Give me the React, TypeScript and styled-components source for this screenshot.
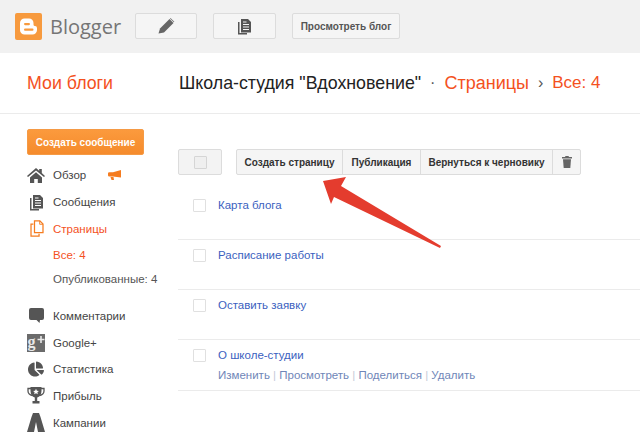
import React from 'react';
import styled, { createGlobalStyle } from 'styled-components';
import { FaChartPie } from 'react-icons/fa';

const GlobalStyle = createGlobalStyle`
  html, body {
    margin: 0;
    padding: 0;
    background: #fff;
    font-family: "Liberation Sans", Arial, sans-serif;
  }
`;

const Page = styled.div`
  position: relative;
  width: 640px;
  height: 433px;
  overflow: hidden;
`;

const TopBar = styled.header`
  display: flex;
  align-items: center;
  height: 53px;
  padding: 0 0 1px 15px;
  box-sizing: border-box;
  background: #f1f1f1;
`;

const Brand = styled.div`
  display: flex;
  align-items: center;
  gap: 8px;
  width: 120px;
  font-family: "Open Sans", sans-serif;
  font-size: 20px;
  color: #757575;
`;

const TopButton = styled.button<{ $width: number }>`
  display: flex;
  align-items: center;
  justify-content: center;
  width: ${p => p.$width}px;
  height: 26px;
  margin-right: 16px;
  padding: 0;
  border: 1px solid #dcdcdc;
  border-radius: 2px;
  background: #f5f5f5;
  color: #555;
  font: bold 10px "Liberation Sans", Arial, sans-serif;
`;

const TitleRow = styled.div`
  display: flex;
  align-items: center;
  height: 61px;
  padding: 0 0 0 27px;
  box-sizing: border-box;
  border-bottom: 1px solid #ebebeb;
  font-size: 17.800px;
  white-space: nowrap;
`;

const MyBlogs = styled.span`
  width: 152px;
  color: #f4511e;
`;

const BlogName = styled.span`
  color: #222;
`;

const Crumb = styled.span<{ $size: number }>`
  color: #f4511e;
  font-size: ${p => p.$size}px;
`;

const Sep = styled.span<{ $gap: number }>`
  margin: 0 ${p => p.$gap}px;
  color: #555;
  font-size: 16px;
`;

const Body = styled.div`
  display: flex;
`;

const Sidebar = styled.aside`
  width: 178px;
  flex: none;
  padding: 15px 0 0 27px;
  box-sizing: border-box;
`;

const CreateButton = styled.button`
  display: block;
  width: 117px;
  height: 26px;
  margin-bottom: 7px;
  padding: 0;
  border: 1px solid #f59a45;
  border-radius: 2px;
  background: linear-gradient(#fb9a3d, #f58b2c);
  color: #fff;
  font: bold 10px "Liberation Sans", Arial, sans-serif;
`;

const NavItem = styled.div<{ $active?: boolean; $gapBefore?: number }>`
  display: flex;
  align-items: center;
  height: 26.700px;
  margin-top: ${p => p.$gapBefore ?? 0}px;
  font-size: 11.500px;
  color: ${p => (p.$active ? '#f4511e' : '#444')};
`;

const NavIcon = styled.span<{ $active?: boolean; $inset?: number }>`
  display: flex;
  align-items: center;
  justify-content: flex-start;
  width: 26px;
  padding-left: ${p => p.$inset ?? 0}px;
  box-sizing: border-box;
  flex: none;
  color: ${p => (p.$active ? '#f57c1f' : '#555')};
`;

const SubItem = styled.div<{ $active?: boolean; $height: number }>`
  display: flex;
  align-items: center;
  height: ${p => p.$height}px;
  padding-left: 26px;
  font-size: 11.500px;
  white-space: nowrap;
  color: ${p => (p.$active ? '#f4511e' : '#555')};
`;

const Promo = styled.span`
  display: flex;
  margin-left: 22px;
`;

const Main = styled.main`
  flex: 1;
  min-width: 0;
  padding-top: 35px;
`;

const Toolbar = styled.div`
  display: flex;
  height: 26px;
`;

const SelectAll = styled.div`
  display: flex;
  align-items: center;
  justify-content: center;
  width: 44px;
  height: 26px;
  margin-right: 14px;
  box-sizing: border-box;
  border: 1px solid #dcdcdc;
  border-radius: 2px;
  background: #f3f3f3;
`;

const ButtonGroup = styled.div`
  display: flex;
  height: 26px;
  box-sizing: border-box;
  border: 1px solid #dcdcdc;
  border-radius: 2px;
  background: #f5f5f5;
`;

const GroupButton = styled.button<{ $width: number }>`
  display: flex;
  align-items: center;
  justify-content: center;
  width: ${p => p.$width}px;
  padding: 0;
  border: 0;
  border-right: 1px solid #dcdcdc;
  background: transparent;
  color: #333;
  font: bold 10px "Liberation Sans", Arial, sans-serif;
  &:last-child {
    border-right: 0;
  }
`;

const Check = styled.span<{ $dim?: boolean }>`
  display: block;
  flex: none;
  width: 13px;
  height: 13px;
  box-sizing: border-box;
  border: 1px solid ${p => (p.$dim ? '#d5d5d5' : '#e0e0e0')};
  border-radius: 1px;
  background: ${p => (p.$dim ? '#efefef' : '#fff')};
`;

const RowList = styled.div`
  margin-top: 15px;
`;

const Row = styled.div`
  display: flex;
  gap: 12px;
  min-height: 50px;
  padding: 9px 0 0 15px;
  box-sizing: border-box;
  border-bottom: 1px solid #ebebeb;
  &:last-child {
    min-height: 51px;
  }
`;

const RowText = styled.div`
  display: flex;
  flex-direction: column;
  gap: 8px;
`;

const PageLink = styled.span`
  color: #3b5fc0;
  font-size: 11.500px;
`;

const Actions = styled.div`
  font-size: 11.500px;
  color: #c5cbd8;
  span {
    color: #6f86b8;
  }
`;

const ArrowOverlay = styled.svg`
  position: absolute;
  left: 315px;
  top: 170px;
`;

const LogoMark = () => (
  <svg width="27" height="27" viewBox="0 0 27 27">
    <rect width="27" height="27" rx="2" fill="#f79a3e" />
    <path
      d="M9.500 5.500h4.500a4.500 4.500 0 0 1 4.500 4.500v1.500a1.500 1.500 0 0 0 1.500 1.500a2 2 0 0 1 2 2v2a4.500 4.500 0 0 1-4.500 4.500h-8a4.500 4.500 0 0 1-4.500-4.500v-7a4.500 4.500 0 0 1 4.500-4.500z"
      fill="#fff"
    />
    <rect x="9" y="10" width="6" height="2.200" rx="1.100" fill="#f79a3e" />
    <rect x="9" y="15.600" width="9.500" height="2.200" rx="1.100" fill="#f79a3e" />
  </svg>
);

const PencilIcon = () => (
  <svg width="17" height="16" viewBox="0 0 17 16" fill="#666">
    <path d="M0.500 15.500l1.500-5L11.500 1l4 4-9.500 9.500z" />
    <path d="M12.500 0l3.800 3.800-.5.500-3.800-3.800z" />
  </svg>
);

const DocsIcon = () => (
  <svg width="15" height="17" viewBox="0 0 15 17" fill="currentColor">
    <path d="M1 4h1.500v11H10v1.500H1z" />
    <path d="M4 1h7l3 3v10.500H4zM6 6v1h6V6zM6 8.500v1h6v-1zM6 11v1h6v-1zM6 3.500v1h3.500v-1z" fillRule="evenodd" />
  </svg>
);

const HomeIcon = () => (
  <svg width="18" height="15" viewBox="0 0 18 15" fill="currentColor">
    <path d="M9 0l3.200 2.800V1h2.600v4l3.200 3-1 1L9 2.600 1 9 0 8z" />
    <path d="M3 9.500L9 4.300l6 5.200V15h-4.200v-4H7.200v4H3z" />
  </svg>
);

const MegaphoneIcon = () => (
  <svg width="13" height="10" viewBox="0 0 13 10" fill="#f57c1f">
    <path d="M13 0v7.500L5 6.500H1.200A1.200 1.200 0 0 1 0 5.300V3.400A1.200 1.200 0 0 1 1.200 2.200H5z" />
    <path d="M2.500 7h3l.5 3H3.500z" />
  </svg>
);

const PagesIcon = () => (
  <svg width="14" height="17" viewBox="0 0 15 19" fill="none" stroke="currentColor" strokeWidth="1.400">
    <path d="M4.700 1h6l3.500 3.500V14H4.700z" />
    <path d="M10.500 1v3.800h3.700" strokeWidth="1" />
    <path d="M3.500 4.500H.8V18h9v-2.500" />
  </svg>
);

const CommentIcon = () => (
  <svg width="15" height="15" viewBox="0 0 15 15" fill="currentColor">
    <path d="M2 0h11a2 2 0 0 1 2 2v8a2 2 0 0 1-2 2h-2l-.5 3L7.500 12H2a2 2 0 0 1-2-2V2a2 2 0 0 1 2-2z" />
  </svg>
);

const GooglePlusIcon = () => (
  <svg width="18" height="18" viewBox="0 0 18 18">
    <rect width="18" height="18" fill="#6b6b6b" />
    <text x="0.500" y="12.500" fontSize="16" fontWeight="700" fontFamily="Liberation Serif, serif" fill="#e8e8e8">g</text>
    <path d="M10.500 5.500h7M14 2v7" stroke="#e8e8e8" strokeWidth="1.600" />
  </svg>
);

const TrophyIcon = () => (
  <svg width="18" height="18" viewBox="0 0 18 18" fill="currentColor">
    <path d="M4 1.500H1v2.500c0 2.500 2 4 4.500 4.500M14 1.500h3v2.500c0 2.500-2 4-4.500 4.500" fill="none" stroke="currentColor" strokeWidth="1.300" />
    <path d="M3.500 0h11v4c0 3.500-2 6-4.300 6.500v3.500h2.300v2.500h-7V14h2.300v-3.500C5.500 10 3.500 7.500 3.500 4z" />
    <path d="M9 1.800l.9 1.900 2 .2-1.500 1.400.4 2L9 6.300 7.200 7.300l.4-2L6.100 3.900l2-.2z" fill="#fff" />
  </svg>
);

const CampaignIcon = () => (
  <svg width="18" height="19" viewBox="0 0 18 19" fill="currentColor">
    <path d="M6 0h6l1.500 4L18 19h-7L9 9 7 19H0L4.500 4z" />
  </svg>
);

const TrashIcon = () => (
  <svg width="10" height="12" viewBox="0 0 10 12" fill="#666">
    <path d="M3.500 0h3l.5 1h3v1.500H0V1h3z" />
    <path d="M1 3.300h8L8.300 12H1.700z" />
  </svg>
);

const Arrow = () => (
  <ArrowOverlay width="140" height="90" viewBox="315 170 140 90">
    <polygon
      points="323,181 346,177 341,186 441,246 440,248 334,197 331,204"
      fill="#e43c2e"
    />
  </ArrowOverlay>
);

const pages = [
  { title: 'Карта блога' },
  { title: 'Расписание работы' },
  { title: 'Оставить заявку' },
  { title: 'О школе-студии', actions: ['Изменить', 'Просмотреть', 'Поделиться', 'Удалить'] },
];

export default function App() {
  return (
    <Page>
      <GlobalStyle />
      <TopBar>
        <Brand>
          <LogoMark />
          Blogger
        </Brand>
        <TopButton $width={62}><PencilIcon /></TopButton>
        <TopButton $width={63}><DocsIcon /></TopButton>
        <TopButton $width={108}>Просмотреть блог</TopButton>
      </TopBar>
      <TitleRow>
        <MyBlogs>Мои блоги</MyBlogs>
        <BlogName>Школа-студия "Вдохновение"</BlogName>
        <Sep $gap={9}>·</Sep>
        <Crumb $size={18}>Страницы</Crumb>
        <Sep $gap={9}>›</Sep>
        <Crumb $size={17}>Все: 4</Crumb>
      </TitleRow>
      <Body>
        <Sidebar>
          <CreateButton>Создать сообщение</CreateButton>
          <NavItem>
            <NavIcon><HomeIcon /></NavIcon>
            Обзор
            <Promo><MegaphoneIcon /></Promo>
          </NavItem>
          <NavItem>
            <NavIcon $inset={2}><DocsIcon /></NavIcon>
            Сообщения
          </NavItem>
          <NavItem $active>
            <NavIcon $active $inset={3}><PagesIcon /></NavIcon>
            Страницы
          </NavItem>
          <SubItem $active $height={25}>Все: 4</SubItem>
          <SubItem $height={24}>Опубликованные: 4</SubItem>
          <NavItem $gapBefore={11.5}>
            <NavIcon $inset={2}><CommentIcon /></NavIcon>
            Комментарии
          </NavItem>
          <NavItem>
            <NavIcon><GooglePlusIcon /></NavIcon>
            Google+
          </NavItem>
          <NavItem>
            <NavIcon $inset={1}><FaChartPie size={16} /></NavIcon>
            Статистика
          </NavItem>
          <NavItem>
            <NavIcon><TrophyIcon /></NavIcon>
            Прибыль
          </NavItem>
          <NavItem>
            <NavIcon><CampaignIcon /></NavIcon>
            Кампании
          </NavItem>
        </Sidebar>
        <Main>
          <Toolbar>
            <SelectAll><Check $dim /></SelectAll>
            <ButtonGroup>
              <GroupButton $width={106}>Создать страницу</GroupButton>
              <GroupButton $width={78}>Публикация</GroupButton>
              <GroupButton $width={132}>Вернуться к черновику</GroupButton>
              <GroupButton $width={27}><TrashIcon /></GroupButton>
            </ButtonGroup>
          </Toolbar>
          <RowList>
            {pages.map(page => (
              <Row key={page.title}>
                <Check />
                <RowText>
                  <PageLink>{page.title}</PageLink>
                  {page.actions && (
                    <Actions>
                      {page.actions.map((a, i) => (
                        <React.Fragment key={a}>
                          {i > 0 && ' | '}
                          <span>{a}</span>
                        </React.Fragment>
                      ))}
                    </Actions>
                  )}
                </RowText>
              </Row>
            ))}
          </RowList>
        </Main>
      </Body>
      <Arrow />
    </Page>
  );
}
